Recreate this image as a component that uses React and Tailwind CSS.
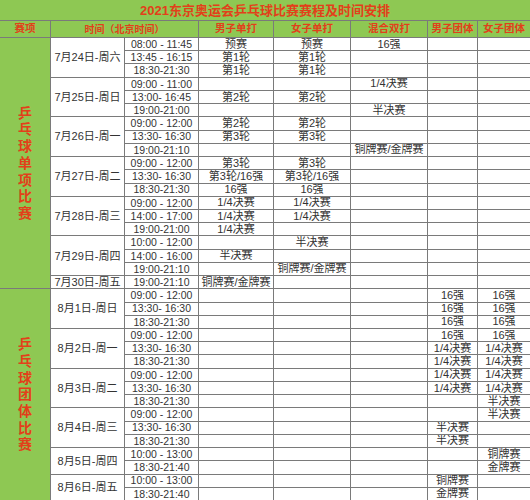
import React from "react";

const spanCls = { 1: "row-span-1", 2: "row-span-2", 3: "row-span-3" };

const blocks = [
  {
    date: "7月24日-周六",
    rows: [
      ["08:00 - 11:45", "预赛", "预赛", "16强", "", ""],
      ["13:45 - 16:15", "第1轮", "第1轮", "", "", ""],
      ["18:30-21:30", "第1轮", "第1轮", "", "", ""],
    ],
  },
  {
    date: "7月25日-周日",
    rows: [
      ["09:00 - 11:00", "", "", "1/4决赛", "", ""],
      ["13:00- 16:45", "第2轮", "第2轮", "", "", ""],
      ["19:00-21:00", "", "", "半决赛", "", ""],
    ],
  },
  {
    date: "7月26日-周一",
    rows: [
      ["09:00 - 12:00", "第2轮", "第2轮", "", "", ""],
      ["13:30- 16:30", "第3轮", "第3轮", "", "", ""],
      ["19:00-21:10", "", "", "铜牌赛/金牌赛", "", ""],
    ],
  },
  {
    date: "7月27日-周二",
    rows: [
      ["09:00 - 12:00", "第3轮", "第3轮", "", "", ""],
      ["13:30- 16:30", "第3轮/16强", "第3轮/16强", "", "", ""],
      ["18:30-21:30", "16强", "16强", "", "", ""],
    ],
  },
  {
    date: "7月28日-周三",
    rows: [
      ["09:00 - 12:00", "1/4决赛", "1/4决赛", "", "", ""],
      ["14:00 - 17:00", "1/4决赛", "1/4决赛", "", "", ""],
      ["19:00-21:00", "1/4决赛", "", "", "", ""],
    ],
  },
  {
    date: "7月29日-周四",
    rows: [
      ["10:00 - 12:00", "", "半决赛", "", "", ""],
      ["14:00 - 16:00", "半决赛", "", "", "", ""],
      ["19:00-21:10", "", "铜牌赛/金牌赛", "", "", ""],
    ],
  },
  {
    date: "7月30日-周五",
    rows: [["19:00-21:10", "铜牌赛/金牌赛", "", "", "", ""]],
  },
  {
    date: "8月1日-周日",
    group: 2,
    rows: [
      ["09:00 - 12:00", "", "", "", "16强", "16强"],
      ["13:30- 16:30", "", "", "", "16强", "16强"],
      ["18:30-21:30", "", "", "", "16强", "16强"],
    ],
  },
  {
    date: "8月2日-周一",
    rows: [
      ["09:00 - 12:00", "", "", "", "16强", "16强"],
      ["13:30- 16:30", "", "", "", "1/4决赛", "1/4决赛"],
      ["18:30-21:30", "", "", "", "1/4决赛", "1/4决赛"],
    ],
  },
  {
    date: "8月3日-周二",
    rows: [
      ["09:00 - 12:00", "", "", "", "1/4决赛", "1/4决赛"],
      ["13:30- 16:30", "", "", "", "1/4决赛", "1/4决赛"],
      ["18:30-21:30", "", "", "", "", "半决赛"],
    ],
  },
  {
    date: "8月4日-周三",
    rows: [
      ["09:00 - 12:00", "", "", "", "", "半决赛"],
      ["13:30- 16:30", "", "", "", "半决赛", ""],
      ["18:30-21:30", "", "", "", "半决赛", ""],
    ],
  },
  {
    date: "8月5日-周四",
    rows: [
      ["10:00 - 13:00", "", "", "", "", "铜牌赛"],
      ["18:30-21:40", "", "", "", "", "金牌赛"],
    ],
  },
  {
    date: "8月6日-周五",
    rows: [
      ["10:00 - 13:00", "", "", "", "铜牌赛", ""],
      ["18:30-21:40", "", "", "", "金牌赛", ""],
    ],
  },
];

function VerticalLabel({ text, cls }) {
  return (
    <div
      className={`bg-[#8ec853] ${cls} flex flex-col items-center justify-center text-[14px] font-bold leading-[16.7px] text-[#e2401a]`}
    >
      {text.split("").map((c, i) => (
        <span key={i}>{c}</span>
      ))}
    </div>
  );
}

export default function App() {
  const cells = [];
  blocks.forEach((b, bi) => {
    b.rows.forEach((r, ri) => {
      if (bi === 0 && ri === 0) {
        cells.push(<VerticalLabel key="g1" text="乒乓球单项比赛" cls="row-span-19" />);
      }
      if (b.group === 2 && ri === 0) {
        cells.push(<VerticalLabel key="g2" text="乒乓球团体比赛" cls="row-span-16" />);
      }
      if (ri === 0) {
        cells.push(
          <div
            key={`d${bi}`}
            className={`${spanCls[b.rows.length]} flex items-center justify-center bg-white text-[11px] text-[#333]`}
          >
            {b.date}
          </div>
        );
      }
      r.forEach((v, ci) => {
        cells.push(
          <div
            key={`c${bi}-${ri}-${ci}`}
            className={`flex items-center justify-center overflow-hidden whitespace-nowrap bg-white leading-none text-[#333] ${
              ci === 0 ? "text-[10.5px]" : "text-[11px]"
            }`}
          >
            {v}
          </div>
        );
      });
    });
  });

  return (
    <div
      className="h-[500px] w-[530px] overflow-hidden bg-white"
      style={{ fontFamily: '"Liberation Sans", "Noto Sans CJK SC", sans-serif' }}
    >
      <div className="grid h-[500px] w-[530px] grid-cols-[50px_73px_73px_74px_76px_76px_49px_minmax(0,1fr)] grid-rows-[20px_16px_repeat(35,minmax(0,1fr))] gap-px bg-[#7a7a7a]">
        <div className="col-span-8 flex items-center justify-center bg-[#8ec853] text-[13px] font-bold leading-none text-[#e2401a]">
          2021东京奥运会乒乓球比赛赛程及时间安排
        </div>
        <div className="flex items-center justify-center bg-[#8ec853] text-[10.5px] font-bold text-[#e2401a]">赛项</div>
        <div className="col-span-2 flex items-center justify-center bg-[#8ec853] text-[10px] font-bold text-[#e2401a]">时间（北京时间）</div>
        <div className="flex items-center justify-center bg-[#8ec853] text-[10.5px] font-bold text-[#e2401a]">男子单打</div>
        <div className="flex items-center justify-center bg-[#8ec853] text-[10.5px] font-bold text-[#e2401a]">女子单打</div>
        <div className="flex items-center justify-center bg-[#8ec853] text-[10.5px] font-bold text-[#e2401a]">混合双打</div>
        <div className="flex items-center justify-center bg-[#8ec853] text-[10.5px] font-bold text-[#e2401a]">男子团体</div>
        <div className="flex items-center justify-center bg-[#8ec853] text-[10.5px] font-bold text-[#e2401a]">女子团体</div>
        {cells}
      </div>
    </div>
  );
}
